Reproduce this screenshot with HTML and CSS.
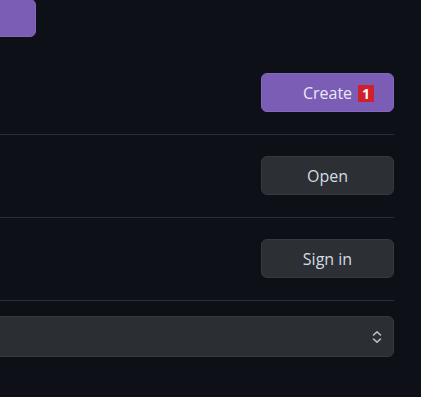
FILE: index.html
```html
<!DOCTYPE html>
<html lang="en">

<head>
    <meta charset="UTF-8">
    <meta name="viewport" content="width=device-width, initial-scale=1.0">
    <title>Account</title>
    <link rel="stylesheet" href="styles.css">
</head>

<body>
    <div class="page">
        <button class="btn btn-primary top-btn" aria-label="Menu"></button>

        <div class="row">
            <button class="btn btn-primary">Create<span class="badge">1</span></button>
        </div>
        <div class="row">
            <button class="btn btn-dark">Open</button>
        </div>
        <div class="row">
            <button class="btn btn-dark">Sign in</button>
        </div>

        <div class="select">
            <svg class="select-icon" width="12" height="14" viewBox="0 0 12 14" fill="none" stroke="currentColor"
                stroke-width="1.6" stroke-linecap="round" stroke-linejoin="round">
                <path d="M2.5 5 L6 1.8 L9.5 5" />
                <path d="M2.5 9 L6 12.2 L9.5 9" />
            </svg>
        </div>
    </div>
</body>

</html>
```

FILE: styles.css
```css
body {
    margin: 0;
    background-color: #0d1117;
    font-family: "Open Sans", "Liberation Sans", sans-serif;
    overflow: hidden;
}

.page {
    padding-right: 27px;
}

.btn {
    display: block;
    box-sizing: border-box;
    border: 1px solid transparent;
    border-radius: 6px;
    font-family: inherit;
    font-size: 16px;
    cursor: pointer;
    padding: 0;
}

.btn-primary {
    background-color: #7b5db5;
    border-color: #8468bd;
    color: #ece6f7;
}

.btn-dark {
    background-color: #2c3035;
    border-color: #363a40;
    color: #d4dbe2;
}

.top-btn {
    width: 46px;
    height: 38px;
    margin-left: -10px;
    margin-top: -1px;
}

.row {
    display: flex;
    justify-content: flex-end;
    padding: 21px 0 22px;
    border-bottom: 1px solid #2a2f35;
}

.row:first-of-type {
    padding-top: 36px;
}

.row .btn {
    position: relative;
    width: 133px;
    height: 39px;
    line-height: 38px;
}

.badge {
    position: absolute;
    left: 96px;
    top: 11px;
    width: 16px;
    height: 17px;
    background-color: #d0202d;
    color: #ffffff;
    font-size: 14px;
    font-weight: 700;
    line-height: 17px;
    text-align: center;
}

.select {
    display: flex;
    justify-content: flex-end;
    align-items: center;
    box-sizing: border-box;
    height: 41px;
    margin-top: 15px;
    margin-left: -10px;
    padding-right: 10px;
    background-color: #2b2f33;
    border: 1px solid #353a3f;
    border-radius: 6px;
}

.select-icon {
    color: #b7bec6;
}
```
